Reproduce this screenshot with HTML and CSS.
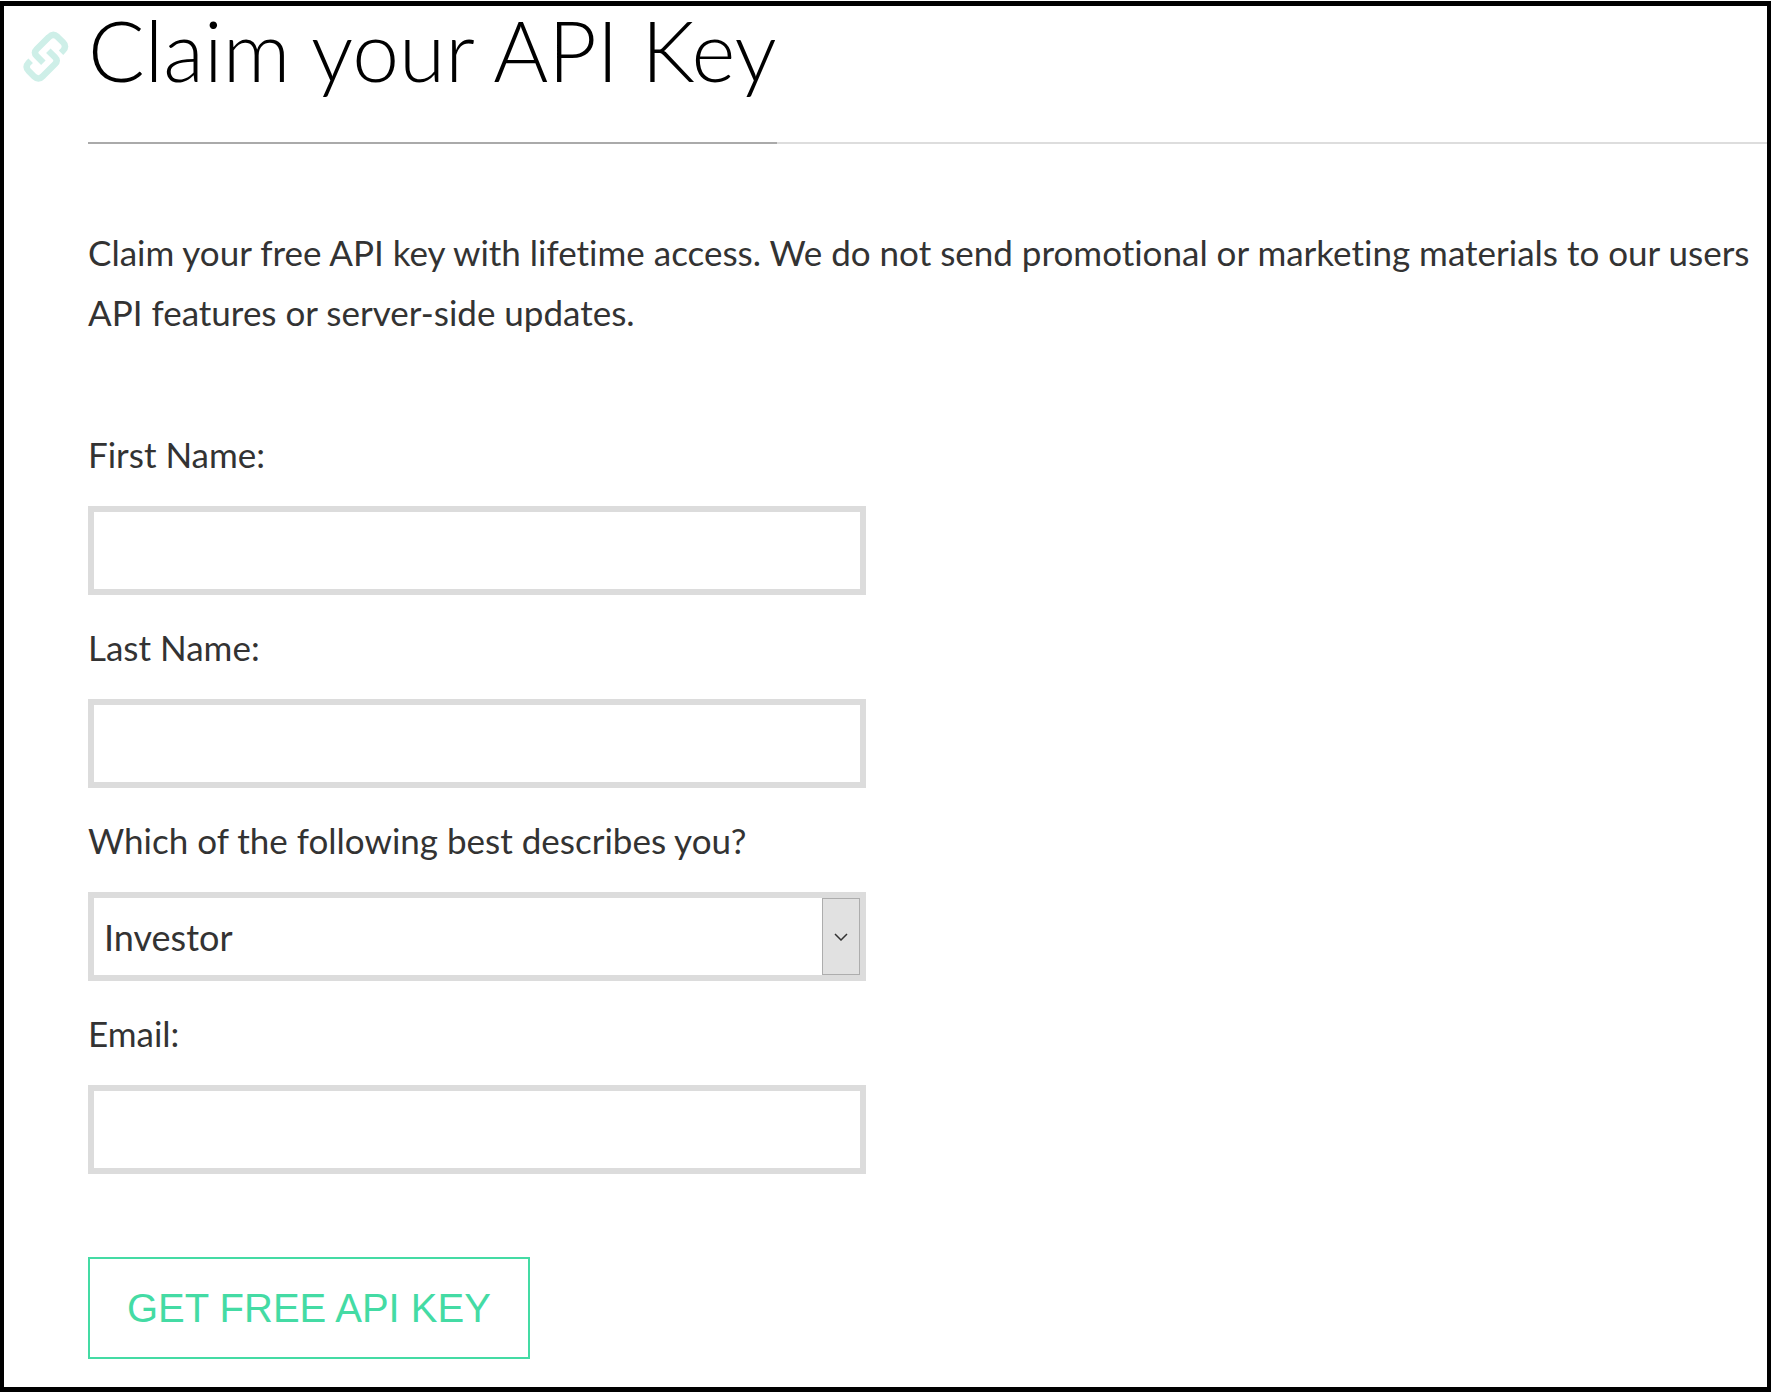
FILE: index.html
```html
<!DOCTYPE html>
<html lang="en">
<head>
    <meta charset="UTF-8">
    <meta name="viewport" content="width=device-width, initial-scale=1.0">
    <title>Claim your API Key</title>
    <link rel="stylesheet" href="styles.css">
</head>
<body>
    <main class="page">
        <header class="page-header">
            <a class="anchor" href="#api-key" aria-label="Link to this section">
                <svg viewBox="70 92 138 154" fill="none" stroke="currentColor" stroke-width="19">
                    <path d="M131 187 L111 167 Q101 157 111 147 L147 111 Q160 97 173 109 L190 126 Q202 138 190 151 L184 157" />
                    <path d="M146 151 L166 171 Q176 181 166 191 L130 227 Q117 241 104 229 L87 212 Q75 200 87 187 L93 181" />
                </svg>
            </a>
            <h1 id="api-key"><span>Claim your API Key</span></h1>
        </header>

        <div class="content">
            <p class="intro">Claim your free API key with lifetime access. We do not send promotional or marketing materials to our users<br>API features or server-side updates.</p>

            <form class="key-form">
                <label for="first-name">First Name:</label>
                <input type="text" id="first-name" name="first-name">

                <label for="last-name">Last Name:</label>
                <input type="text" id="last-name" name="last-name">

                <label for="occupation">Which of the following best describes you?</label>
                <div class="select-box">
                    <select id="occupation" name="occupation">
                        <option>Investor</option>
                    </select>
                    <span class="arrow">
                        <svg viewBox="0 0 14 8" fill="none" stroke="currentColor" stroke-width="1.5">
                            <path d="M1 1 L7 7 L13 1" />
                        </svg>
                    </span>
                </div>

                <label for="email">Email:</label>
                <input type="email" id="email" name="email">

                <button type="button">GET FREE API KEY</button>
            </form>
        </div>
    </main>
</body>
</html>
```
FILE: styles.css
```css
* {
    box-sizing: border-box;
}

body {
    margin: 0;
    padding: 1px 0;
    background-color: white;
    color: #333;
    font-family: Lato, sans-serif;
    font-size: 35px;
    font-variant-ligatures: none;
    line-height: 60px;
}

.page {
    border: solid black;
    border-width: 5px 4px;
    padding-bottom: 28px;
}

.page-header {
    display: flex;
    gap: 19px;
    padding-left: 19px;
}

.anchor {
    flex: none;
    width: 46px;
    margin-top: 25px;
    color: #ceefe8;
}

.anchor svg {
    display: block;
    width: 100%;
}

h1 {
    flex: 1;
    margin: 0;
    border-bottom: 2px solid #ddd;
    color: black;
    font-size: 84px;
    font-weight: 300;
    line-height: 88px;
}

/* darker part of the rule sits under the title only */
h1 span {
    display: inline-block;
    vertical-align: top;
    margin-bottom: -2px;
    padding-bottom: 48px;
    border-bottom: 2px solid #aaa;
}

.content {
    padding-left: 84px;
}

.intro {
    margin: 78px 0 82px;
}

.key-form {
    display: flex;
    flex-direction: column;
    gap: 22px;
    max-width: 778px;
}

input,
select {
    display: block;
    width: 100%;
    height: 89px;
    padding: 0 10px;
    border: 6px solid #dcdcdc;
    border-radius: 0;
    background-color: white;
    color: #333;
    font-family: inherit;
    font-size: 36px;
}

select {
    appearance: none;
}

.select-box {
    position: relative;
}

.arrow {
    position: absolute;
    top: 6px;
    right: 6px;
    bottom: 6px;
    width: 38px;
    display: flex;
    align-items: center;
    justify-content: center;
    border: 1px solid #adadad;
    background-color: #e1e1e1;
    color: #333;
    pointer-events: none;
}

.arrow svg {
    width: 14px;
    height: 8px;
}

button {
    align-self: flex-start;
    margin-top: 61px;
    padding: 27px 37px;
    border: 2px solid #44dba4;
    background-color: white;
    color: #44dba4;
    font-family: "Liberation Sans", Arial, sans-serif;
    font-size: 40px;
    line-height: 44px;
    cursor: pointer;
}
```
